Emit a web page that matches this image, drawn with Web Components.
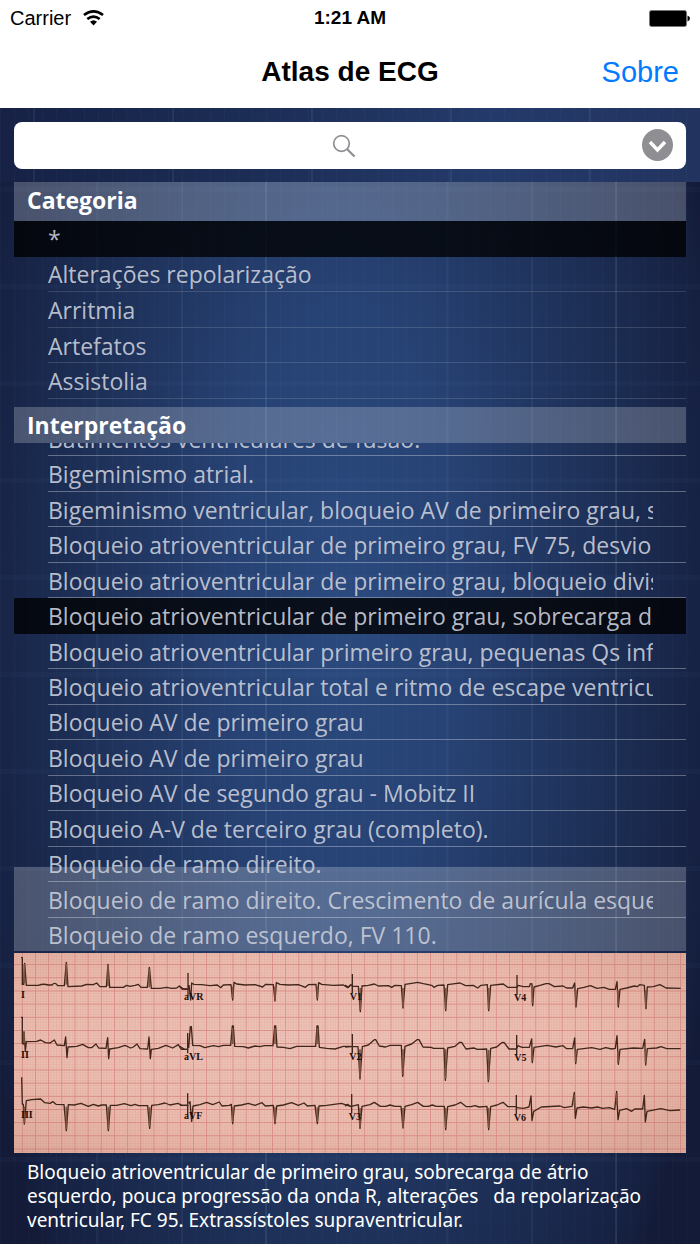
<!DOCTYPE html>
<html lang="pt">
<head>
<meta charset="utf-8">
<meta name="viewport" content="width=device-width, initial-scale=1">
<title>Atlas de ECG</title>
<style>
html, body { margin: 0; height: 100%; background: #131c38; }
</style>
</head>
<body>
<atlas-app></atlas-app>
<script>
const define = (name, html, setup) => {
  const template = document.createElement('template');
  template.innerHTML = html;
  customElements.define(name, class extends HTMLElement {
    constructor() {
      super();
      this.attachShadow({ mode: 'open' }).append(template.content.cloneNode(true));
    }
    connectedCallback() {
      if (setup && !this.ready) { this.ready = true; setup(this, this.shadowRoot); }
    }
  });
};

define('status-bar', `
<style>
  :host { display: grid; grid-template-columns: 1fr auto 1fr; align-items: center; height: 36px; padding: 0 10px; font: 20px "Liberation Sans", Arial, sans-serif; color: #000; }
  .carrier { display: flex; align-items: center; gap: 12px; }
  .time { font-size: 19px; font-weight: 700; }
  svg { display: block; }
  .battery { justify-self: end; }
</style>
<div class="carrier"><span>Carrier</span>
  <svg width="21" height="16" viewBox="0 0 21 16" aria-hidden="true">
    <g fill="none" stroke="#000" stroke-width="2.700"><path d="M1 5Q10.500-2.200 20 5"/><path d="M4.300 9Q10.500 4.200 16.700 9"/></g>
    <path d="M7 11.800Q10.500 8.800 14 11.800L10.500 15.400Z"/>
  </svg>
</div>
<span class="time">1:21 AM</span>
<svg class="battery" width="41" height="17" viewBox="0 0 41 17" aria-hidden="true">
  <rect x=".5" y=".5" width="37" height="16" rx="2" fill="#000" stroke="#777"/>
  <path d="M38.500 5.500Q41 6.500 41 8.500T38.500 11.500Z"/>
</svg>`);

define('nav-bar', `
<style>
  :host { display: grid; grid-template-columns: 1fr auto 1fr; align-items: center; height: 72px; padding: 0 21px; font-family: "Liberation Sans", Arial, sans-serif; }
  h1 { grid-column: 2; margin: 0; font-size: 28px; line-height: 32px; font-weight: 700; color: #000; }
  .action { justify-self: end; }
</style>
<h1><slot></slot></h1><div class="action"><slot name="action"></slot></div>`);

define('search-field', `
<style>
  :host { display: block; padding: 14px 14px 13px; background:
    repeating-linear-gradient(90deg, transparent 0 33px, rgba(150,190,210,.09) 33px 35px, transparent 35px 139px),
    repeating-linear-gradient(90deg, rgba(150,180,220,.04) 0 1px, transparent 1px 14px),
    linear-gradient(90deg, #162145, #1c2d55 35%, #243a6a 70%, #22335f); }
  .box { display: grid; grid-template-columns: 1fr auto; align-items: center; height: 47px; border-radius: 8px; background: #fff; padding-right: 13px; }
  .box > * { grid-row: 1; }
  input { grid-column: 1 / 3; width: 100%; height: 47px; box-sizing: border-box; border: 0; background: none; outline: none; font: 24px "Liberation Sans", sans-serif; text-align: center; }
  .glass { grid-column: 1 / 3; justify-self: center; pointer-events: none; }
  button { grid-column: 2; width: 31px; height: 33px; padding: 0; border: 0; background: none; }
  svg { display: block; }
</style>
<div class="box">
  <input type="text" aria-label="Buscar">
  <svg class="glass" width="24" height="24" viewBox="0 0 24 24" fill="none" stroke="#8e8e93" aria-hidden="true"><circle cx="9.500" cy="9.500" r="7.800" stroke-width="1.700"/><path d="M15 15L22.500 22.500" stroke-width="2.200"/></svg>
  <button type="button" aria-label="Abrir">
    <svg width="31" height="33" viewBox="0 0 31 33"><ellipse cx="15.500" cy="16" rx="15.500" ry="16" fill="#8e8e93"/><path d="M8 13L15.500 21L23 13" fill="none" stroke="#fff" stroke-width="3.400"/></svg>
  </button>
</div>`);

define('list-row', `
<style>
  :host { display: block; position: relative; min-width: 0; }
  :host([selected]) { background: rgba(0,0,0,.78); }
  button { display: block; width: 100%; height: 100%; padding: 0 33px 0 34px; border: 0; background: none; color: rgba(200,204,216,.92); font: 23px/34px var(--face); text-align: left; }
  span { display: block; overflow: hidden; white-space: nowrap; }
  :host::after { content: ""; position: absolute; left: 34px; right: 0; bottom: 0; height: 1px; background: var(--rule, transparent); }
  :host([selected])::after { display: none; }
</style>
<button type="button"><span><slot></slot></span></button>`);

define('pick-list', `
<style>
  :host { display: flex; flex-direction: column; min-height: 0; }
  h2 { flex: none; margin: 0; padding: 0 13px; height: var(--head); font: 700 23px/36px var(--face); color: #fff; background: rgba(255,255,255,.22); }
  .view { flex: 1; min-height: 0; overflow: hidden; display: flex; flex-direction: column; justify-content: flex-end; }
  .rows { flex: none; display: grid; grid-auto-rows: 1fr; height: var(--rows); }
</style>
<h2></h2><div class="view" part="view"><div class="rows"><slot></slot></div></div>`,
(host, root) => { root.querySelector('h2').textContent = host.getAttribute('heading'); });

define('ecg-chart', `
<style>
  :host { display: block; }
  svg { display: block; width: 100%; height: auto; }
  .trace { fill: none; stroke: #43261b; stroke-width: 4; stroke-linejoin: round; }
  .beat { fill: none; stroke: #7d5540; stroke-width: 5; }
  text { font: 700 30px "Liberation Serif", serif; fill: #1c0d0a; }
</style>
<svg viewBox="0 0 2016 600" role="img" aria-label="ECG">
  <defs>
    <pattern id="fine" width="7.900" height="7.900" x="23.500" y="33.500" patternUnits="userSpaceOnUse"><path d="M0 0H7.900M0 0V7.900" stroke="#d99088" stroke-width="2.400" opacity=".5"/></pattern>
    <pattern id="wide" width="39.500" height="39.500" x="23.500" y="33.500" patternUnits="userSpaceOnUse"><path d="M1 0V39.500M0 1H39.500" stroke="#d67f7c" stroke-width="3" opacity=".8"/></pattern>
    <radialGradient id="edge" cx=".45" cy=".45" r=".7"><stop offset="0" stop-color="#fff" stop-opacity=".04"/><stop offset=".6" stop-color="#d08060" stop-opacity=".05"/><stop offset="1" stop-color="#b0705a" stop-opacity=".28"/></radialGradient>
  </defs>
  <rect width="2016" height="600" fill="#ecc2b6"/>
  <rect width="2016" height="600" fill="url(#fine)"/>
  <rect width="2016" height="600" fill="url(#wide)"/>
  <rect width="2016" height="600" fill="url(#edge)"/>
  <g transform="translate(-12 -9)">
    <path class="trace" d="M33 23H37V105M41 105L44 40L49 106H85Q100 100 115 105H126Q135 94 143 107H163L169 37L174 110L215 108L230 103L250 104L260 99L270 110H289L294 43L299 112H340L350 106L360 109L375 106L385 103L393 112H412L418 52L424 115H450L470 112L485 115L500 114L508 108L516 117H535"/>
    <path class="trace" d="M33 202H37V282M40 284L42 245L46 304L49 275L80 274L92 270L106 278L120 279L133 270L141 285L163 287L167 261L171 323L174 291L200 289L218 283L235 293H245L258 282L266 294L288 295L293 263L296 326L299 297L325 293L345 286L362 294L370 291L381 282L390 296L413 297L417 261L421 326L424 298L445 295L468 286L488 294L505 284L514 298H535"/>
    <path class="trace" d="M35 382L37 462L40 463L43 522L49 452L65 449L92 447L104 458L120 460L129 455L138 463L162 464L169 542L175 464L192 465L213 460L235 469L250 463L265 468L275 465H289L295 542L301 466H320L343 461L363 467L375 463L386 467H413L419 535L425 466L445 464L465 459L480 465L504 460L516 466H535"/>
    <g class="beat"><path d="M43 100V42M169 104V40M294 108V46M418 112V56M169 470V538M295 470V538M419 472V530M42 280V250M43 470V518"/></g>
    <text x="33" y="144">I</text><text x="33" y="324">II</text><text x="33" y="504">III</text>
  </g>
  <g transform="translate(498 -9)">
    <path class="trace" d="M0 109Q8 119 23 118M24 69V138M27 105L32 150L35 99L42 103L65 104L90 107L112 105L122 113L130 105L153 104L158 150L162 97L170 102L195 105L225 104L248 111L257 103L280 104L285 153L289 98L300 103L325 105L355 104L376 112L385 104L408 103L412 150L416 98L425 103L460 106L490 105L503 113L512 104"/>
    <path class="trace" d="M0 290L14 298H22M23 249V310M26 294L31 230H34L38 286L60 287L74 293L100 287L116 290L130 286H152L157 228H160L164 289L190 290L205 294L225 288L240 290L253 287H279L284 228H287L291 291L310 292L330 296L350 289L390 289L407 289L411 228H414L418 292L440 295L465 297L490 289H514"/>
    <path class="trace" d="M0 466H23M23 430V494M26 460L30 455L35 514L39 468L60 464L80 457L98 464L118 456L126 468L148 466L154 463L158 521L163 468L185 465L205 460L225 466L246 458L256 468L280 466L285 521L290 468L310 465L335 458L355 466L372 459L382 468L405 466L412 521L417 468L440 466L484 460L512 469"/>
    <path class="beat" d="M158 110V145M285 110V148M412 110V145M158 472V516M285 472V516M412 472V516M158 282V234M285 282V234M412 282V234"/>
    <text x="12" y="149">aVR</text><text x="12" y="329">aVL</text><text x="12" y="508">aVF</text>
  </g>
  <g transform="translate(993 -9)">
    <path class="trace" d="M0 105L10 112L18 104L22 109H40L46 185L51 108L70 106L88 102L100 108L130 107L140 112L150 106L169 107L174 174L180 103L200 100L218 97L235 101L260 106L267 112L278 106L297 105L302 182L308 104L330 101L345 99L362 107L385 106L398 114L408 106L427 104L431 182L437 106L475 102L488 112H516M22 72V130M516 75V134"/>
    <path class="trace" d="M0 291L18 290H39L45 387L52 290L70 285L88 269H92L103 288L122 291L135 286H169L173 379L180 289L200 282L216 269H222L234 291L258 292L266 295H297L301 391L308 294L330 289L344 277H350L363 297L386 294L398 298L425 297L430 395L437 295L455 291L470 278L477 277L492 297H515M22 252V311M515 255V314"/>
    <path class="trace" d="M0 469L8 463L17 470L40 464L45 535L51 469L75 464L88 457L106 469H122L135 465L150 469H168L174 534L180 469L200 464L218 457L235 469H250L262 465L274 469H298L302 539L308 470L330 465L347 457L364 470H378L390 467L402 471L426 469L431 539L437 470L456 465L474 457L489 470H514M20 432V490M514 435V493"/>
    <path class="beat" d="M46 114V180M174 114V170M302 114V178M431 114V178M45 298V380M174 298V374M302 298V386M431 300V390M45 474V530M174 474V530M302 474V534M431 474V534"/>
    <text x="14" y="151">V1</text><text x="13" y="331">V2</text><text x="11" y="510">V3</text>
  </g>
  <g transform="translate(1488 -9)">
    <path class="trace" d="M21 112L24 106L40 110H58L61 101L66 102L68 167L72 111L90 106L108 101H117L133 110L159 108L170 114H188L194 99L198 171L203 116L222 112L241 107L261 115L282 112L298 118H316L321 95L325 171L330 118L350 114L373 108L382 110L389 104L403 106L408 176L412 111L430 110L450 104L468 114L512 115"/>
    <path class="trace" d="M20 295L24 287L36 292H58L65 267L67 338L72 292L112 286L137 291L159 287L170 296H188L194 264L197 341L202 298L245 293L270 298L287 293L305 297L316 295L321 257L325 343L330 298L370 294L398 295L404 268L407 345L412 296L440 294L453 290L470 296H512"/>
    <path class="trace" d="M19 473L40 475L57 471L63 438L66 512L71 484L94 471L150 468L163 473L186 469L193 427L196 505L201 474L220 471L245 474L262 471L278 475L298 473L314 478L320 424L324 509L329 481L350 476L365 484L374 477L398 477L403 436L406 516L411 484L452 476L480 482L510 480"/>
    <path class="beat" d="M67 112V160M197 120V166M324 120V166M407 120V170M66 300V334M197 304V336M324 304V338M407 304V340M193 466V434M320 466V430"/>
    <text x="12" y="154">V4</text><text x="13" y="334">V5</text><text x="11" y="513">V6</text>
  </g>
</svg>`);

define('atlas-app', `
<style>
  :host { --face: "Open Sans", "Noto Sans", sans-serif; display: flex; flex-direction: column; height: 100vh; min-height: 900px; background: #fff; }
  status-bar, nav-bar, search-field { flex: none; }
  .sobre { color: #007aff; font: 29px/32px "Liberation Sans", Arial, sans-serif; text-decoration: none; }
  main { flex: 1; min-height: 0; display: flex; flex-direction: column; padding: 0 14px 12px; background:
    repeating-linear-gradient(90deg, transparent 0 96px, rgba(140,190,200,.06) 96px 98px, transparent 98px 181px, rgba(140,190,200,.06) 181px 183px, transparent 183px 265px, rgba(150,200,200,.11) 265px 267px, transparent 267px 350px),
    repeating-linear-gradient(180deg, transparent 0 5px, rgba(120,160,220,.03) 5px 10px, transparent 10px 97px),
    repeating-linear-gradient(90deg, rgba(150,180,220,.03) 0 1px, transparent 1px 14px),
    radial-gradient(ellipse 56% 95% at 49% 40%, #2b4a7e 0%, #274274 30%, #1e3159 64%, #162142 94%, #131b38 100%); }
  .category { flex: none; --head: 39px; --rows: 178px; --rule: rgba(255,255,255,.14); margin-bottom: 8px; }
  .reading { flex: 1; --head: 36px; --rows: 532px; --rule: rgba(255,255,255,.32); }
  .reading::part(view) { background: linear-gradient(rgba(255,255,255,.22), rgba(255,255,255,.22)) 0 calc(100% - 2px) / 100% 84px no-repeat; }
  figure { flex: none; margin: 0; }
  figcaption { padding: 7px 13px 0; font: 19px/24px "Noto Sans", sans-serif; color: #fff; white-space: pre-line; }
</style>
<status-bar></status-bar>
<nav-bar>Atlas de ECG<a class="sobre" slot="action" href="#sobre">Sobre</a></nav-bar>
<search-field></search-field>
<main>
  <pick-list class="category" heading="Categoria">
    <list-row selected>*</list-row>
    <list-row>Alterações repolarização</list-row>
    <list-row>Arritmia</list-row>
    <list-row>Artefatos</list-row>
    <list-row>Assistolia</list-row>
  </pick-list>
  <pick-list class="reading" heading="Interpretação">
    <list-row>Batimentos ventriculares de fusão.</list-row>
    <list-row>Bigeminismo atrial.</list-row>
    <list-row>Bigeminismo ventricular, bloqueio AV de primeiro grau, s</list-row>
    <list-row>Bloqueio atrioventricular de primeiro grau, FV 75, desvio</list-row>
    <list-row>Bloqueio atrioventricular de primeiro grau, bloqueio divis</list-row>
    <list-row selected>Bloqueio atrioventricular de primeiro grau, sobrecarga de</list-row>
    <list-row>Bloqueio atrioventricular primeiro grau, pequenas Qs infe</list-row>
    <list-row>Bloqueio atrioventricular total e ritmo de escape ventricu</list-row>
    <list-row>Bloqueio AV de primeiro grau</list-row>
    <list-row>Bloqueio AV de primeiro grau</list-row>
    <list-row>Bloqueio AV de segundo grau - Mobitz II</list-row>
    <list-row>Bloqueio A-V de terceiro grau (completo).</list-row>
    <list-row>Bloqueio de ramo direito.</list-row>
    <list-row>Bloqueio de ramo direito. Crescimento de aurícula esque</list-row>
    <list-row style="--rule: transparent">Bloqueio de ramo esquerdo, FV 110.</list-row>
  </pick-list>
  <figure>
    <ecg-chart></ecg-chart>
    <figcaption>Bloqueio atrioventricular de primeiro grau, sobrecarga de átrio
esquerdo, pouca progressão da onda R, alterações &nbsp; da repolarização
ventricular, FC 95. Extrassístoles supraventricular.</figcaption>
  </figure>
</main>`);
</script>
</body>
</html>
